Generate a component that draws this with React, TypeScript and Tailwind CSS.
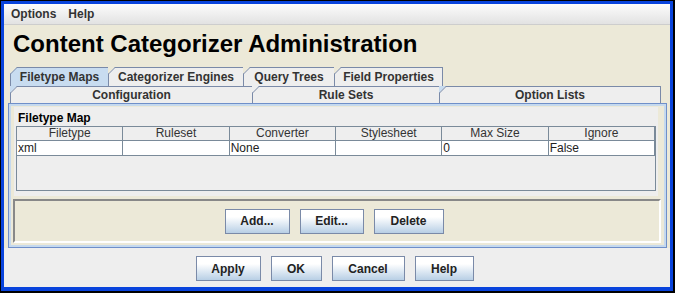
import React from 'react';

// 上段・下段のタブ定義（幅はピクセル固定）
const backTabs = [
  { label: 'Filetype Maps', w: 'w-[99px]', selected: true, corner: '#ece9d8' },
  { label: 'Categorizer Engines', w: 'w-[136px]', selected: false, corner: '#ece9d8' },
  { label: 'Query Trees', w: 'w-[92px]', selected: false, corner: '#ece9d8' },
  { label: 'Field Properties', w: 'w-[109px]', selected: false, corner: '#ece9d8' },
];

const frontTabs = [
  { label: 'Configuration', w: 'w-[243px]', selected: false, corner: '#c8dcf0' },
  { label: 'Rule Sets', w: 'w-[188px]', selected: false, corner: '#eeeeee' },
  { label: 'Option Lists', w: 'w-[222px]', selected: false, corner: '#c8dcf0' },
];

const columns = ['Filetype', 'Ruleset', 'Converter', 'Stylesheet', 'Max Size', 'Ignore'];
const rows = [['xml', '', 'None', '', '0', 'False']];

interface TabProps {
  label: string;
  w: string;
  h: string;
  selected: boolean;
  corner: string;
  first: boolean;
}

const Tab: React.FC<TabProps> = ({ label, w, h, selected, corner, first }) => (
  <div
    className={`relative flex items-center justify-center border-t border-l border-r border-[#7a8aa8] text-[12px] font-bold text-[#333] ${w} ${h} ${first ? '' : '-ml-px'} ${selected ? 'bg-[#c8dcf0]' : 'bg-[#eeeeee]'}`}
  >
    <svg className="absolute -top-px -left-px" width="7" height="7">
      <polygon points="0,0 7,0 0,7" fill={corner} />
      <line x1="0.5" y1="7" x2="7" y2="0.5" stroke="#7a8aa8" strokeWidth="1" />
    </svg>
    <span className="relative">{label}</span>
  </div>
);

const Button: React.FC<{ label: string; w: string }> = ({ label, w }) => (
  <button
    className={`h-[25px] ${w} border border-[#7a8aa8] bg-linear-to-b from-white from-30% to-[#b8cfe5] text-[12px] font-bold text-[#222]`}
  >
    {label}
  </button>
);

const App: React.FC = () => {
  return (
    <div className="w-[675px] h-[293px] border-l border-t border-r-2 border-b-2 border-black font-['Liberation_Sans',Arial,sans-serif]">
      <div className="h-full border-[3px] border-b-4 border-[#0843dc] flex flex-col">
        {/* メニューバー */}
        <div className="h-[21px] flex items-center gap-[12px] pl-[7px] bg-linear-to-b from-[#fcfcfc] to-[#e2e2e2] border-b border-[#cdcdcd] text-[12px] font-bold text-[#333]">
          <span>Options</span>
          <span>Help</span>
        </div>

        {/* ベージュ領域 */}
        <div className="h-[223px] bg-[#ece9d8] pt-[5px]">
          <div className="pl-[9px] h-[28px] leading-[28px] text-[24px] font-bold text-black">
            Content Categorizer Administration
          </div>

          <div className="mt-[9px] ml-[6px] flex">
            {backTabs.map((t, i) => (
              <Tab key={t.label} {...t} h="h-[19px]" first={i === 0} />
            ))}
          </div>
          <div className="ml-[6px] flex">
            {frontTabs.map((t, i) => (
              <Tab key={t.label} {...t} h="h-[17px]" first={i === 0} />
            ))}
          </div>

          {/* タブパネル */}
          <div className="ml-[4px] w-[659px] h-[145px] border border-[#6f8fc9]">
            <div className="h-full border-2 border-[#c5d9ee] pt-[1px]">
              <div className="ml-[3px] w-[644px] h-[89px] bg-[#eeeeee] pt-[4px]">
                <div className="pl-[4px] h-[15px] leading-[15px] text-[12px] font-bold text-black">Filetype Map</div>
                <div className="mx-[2px] h-[65px] border border-[#7a8a99] bg-[#eeeeee]">
                  <div className="grid grid-cols-6 h-[14px] border-b border-[#7a8a99]">
                    {columns.map((c) => (
                      <div key={c} className="border-r border-[#7a8a99] text-center text-[12px] leading-[13px] text-[#333]">
                        {c}
                      </div>
                    ))}
                  </div>
                  {rows.map((r, ri) => (
                    <div key={ri} className="grid grid-cols-6 h-[15px] border-b border-[#7a8a99] bg-white">
                      {r.map((v, ci) => (
                        <div key={ci} className="border-r border-[#7a8a99] pl-[1px] text-[12px] leading-[14px] text-[#222]">
                          {v}
                        </div>
                      ))}
                    </div>
                  ))}
                </div>
              </div>

              <div className="mt-[3px] ml-[2px] w-[648px] h-[44px] border-2 border-t-[#888888] border-l-[#888888] border-b-white border-r-white flex items-center justify-center gap-[10px] pr-[6px]">
                <Button label="Add..." w="w-[65px]" />
                <Button label="Edit..." w="w-[64px]" />
                <Button label="Delete" w="w-[70px]" />
              </div>
            </div>
          </div>
        </div>

        {/* 下部ボタン */}
        <div className="flex-1 bg-[#eeeeee] pt-[8px] pr-[5px] flex justify-center gap-[10px]">
          <Button label="Apply" w="w-[65px]" />
          <Button label="OK" w="w-[51px]" />
          <Button label="Cancel" w="w-[73px]" />
          <Button label="Help" w="w-[59px]" />
        </div>
      </div>
    </div>
  );
};

export default App;
